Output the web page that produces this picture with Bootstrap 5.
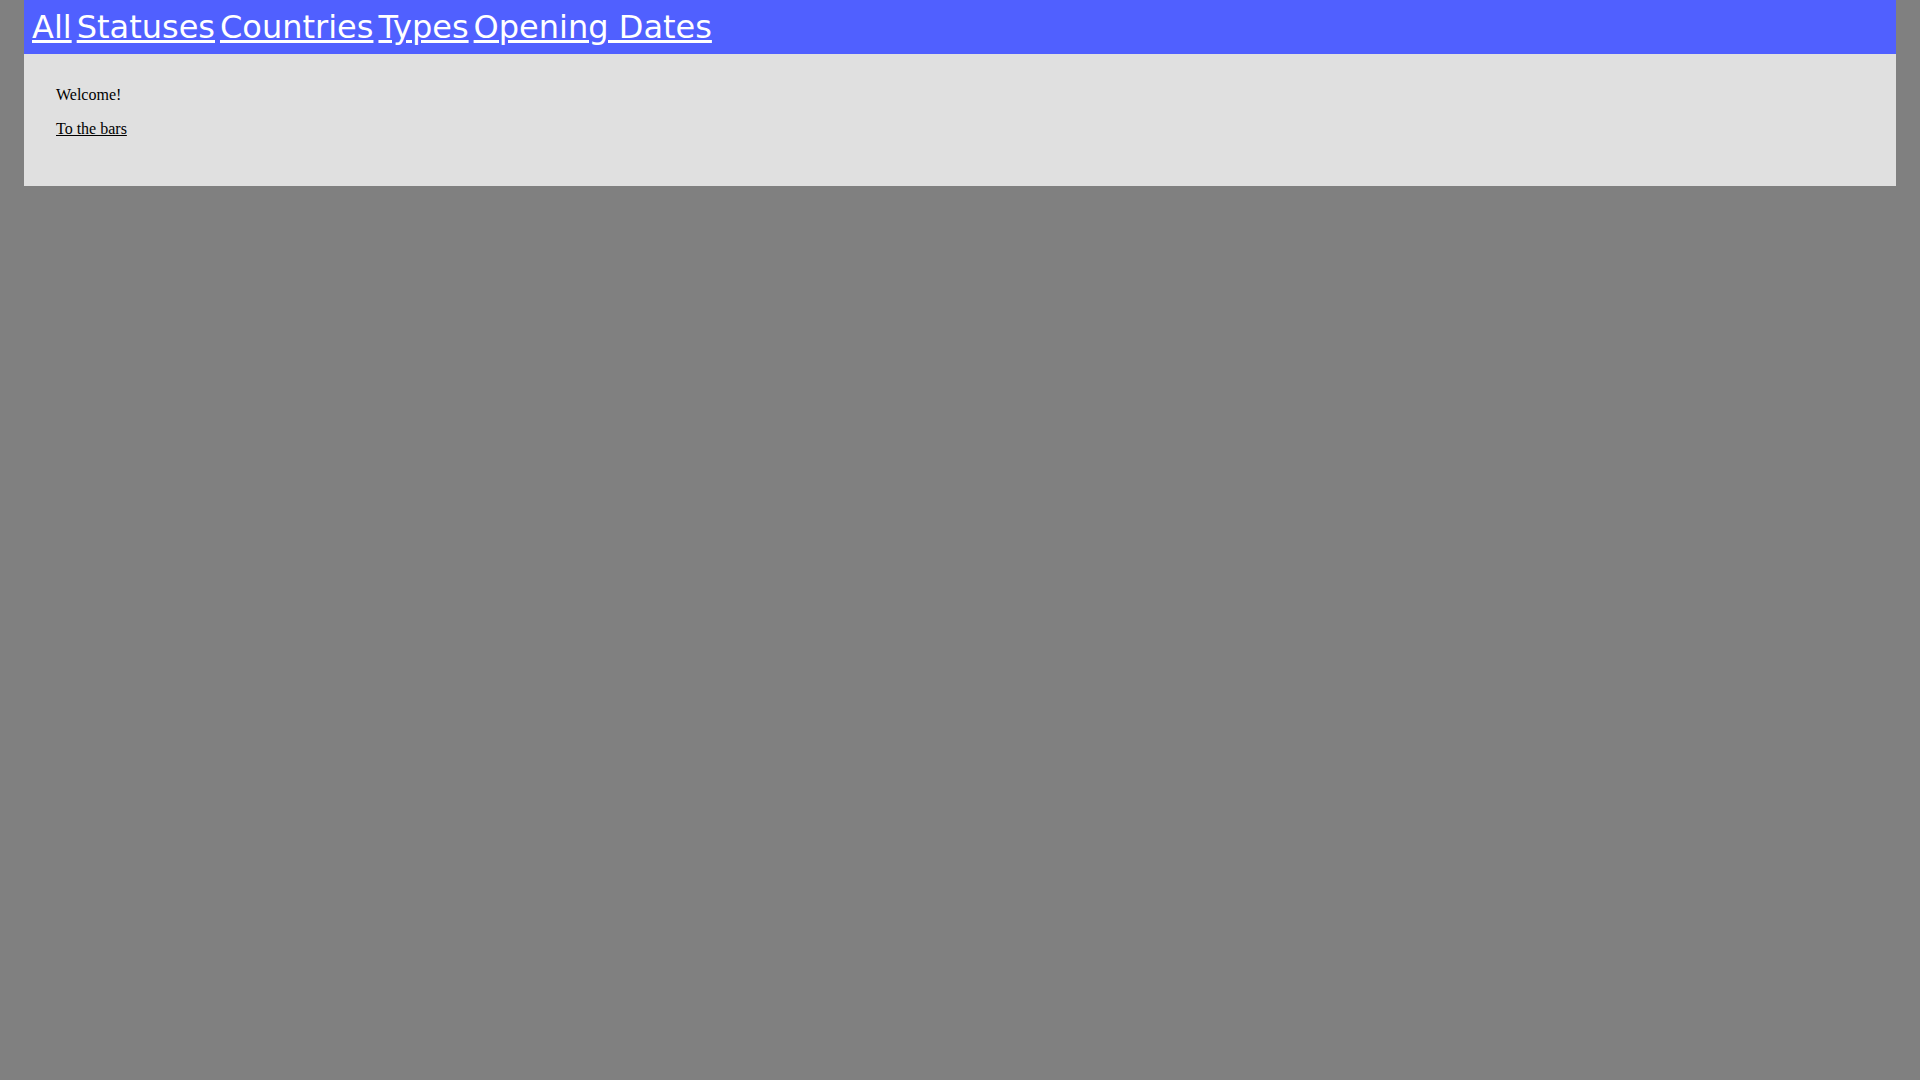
<!DOCTYPE html>
<html lang="en">
<head>
<meta charset="utf-8">
<meta name="viewport" content="width=device-width, initial-scale=1">
<title>Bars</title>
<link href="https://cdn.jsdelivr.net/npm/bootstrap@5.3.0/dist/css/bootstrap.min.css" rel="stylesheet">
<style>
body { background: #808080; color: #000; font: 16px/18px "Liberation Serif", serif; }
.top-nav { background: #5060ff; padding: 8px; gap: 5px; font: 32px/38px "DejaVu Sans", sans-serif; }
.top-nav a { color: #fff; }
.page-body { background: #e0e0e0; padding: 32px; }
.page-body a { color: #000; }
</style>
</head>
<body class="px-4">
<nav class="top-nav d-flex flex-wrap" aria-label="Main">
  <a href="#all">All</a>
  <a href="#statuses">Statuses</a>
  <a href="#countries">Countries</a>
  <a href="#types">Types</a>
  <a href="#dates">Opening Dates</a>
</nav>
<main class="page-body">
  <p class="mb-3">Welcome!</p>
  <p class="mb-3"><a href="#bars">To the bars</a></p>
</main>
<script src="https://cdn.jsdelivr.net/npm/bootstrap@5.3.0/dist/js/bootstrap.bundle.min.js"></script>
</body>
</html>
